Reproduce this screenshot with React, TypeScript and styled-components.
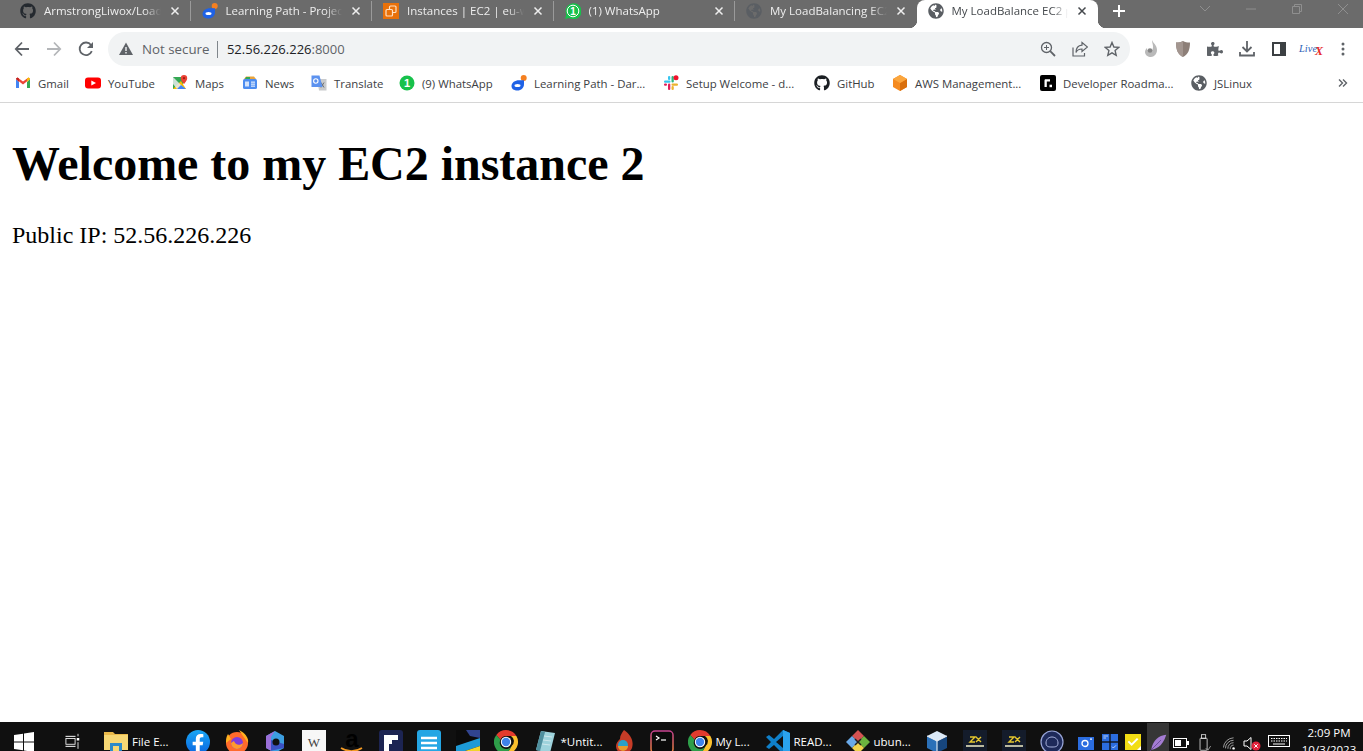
import React from "react";
import styled, { createGlobalStyle } from "styled-components";
import { FaGithub, FaGlobeAmericas, FaFacebookF, FaPuzzlePiece } from "react-icons/fa";

const GlobalStyle = createGlobalStyle`
  html, body { margin: 0; padding: 0; background: #fff; }
  body { font-family: "Open Sans", "Noto Sans", sans-serif; }
`;

const Screen = styled.div`
  width: 1363px;
  height: 751px;
  display: flex;
  flex-direction: column;
  overflow: hidden;
`;

/* tab strip */
const TabStrip = styled.div`
  height: 28px;
  flex: none;
  display: flex;
  background: #6b6b6b;
  padding-left: 9px;
`;

const Tab = styled.div<{ $active?: boolean }>`
  position: relative;
  width: 181.5px;
  height: 28px;
  box-sizing: border-box;
  padding: 0 9px 0 11px;
  display: flex;
  align-items: center;
  gap: 8px;
  color: ${(p) => (p.$active ? "#45494d" : "#eee")};
  background: ${(p) => (p.$active ? "#fff" : "transparent")};
  border-radius: ${(p) => (p.$active ? "8px 8px 0 0" : "0")};
  ${(p) =>
    p.$active
      ? `
    &::before, &::after {
      content: "";
      position: absolute;
      bottom: 0;
      width: 8px;
      height: 8px;
    }
    &::before { left: -8px; background: radial-gradient(circle at 0 0, transparent 8px, #fff 8.5px); }
    &::after { right: -8px; background: radial-gradient(circle at 100% 0, transparent 8px, #fff 8.5px); }
  `
      : ""}
`;

const TabDivider = styled.i<{ $hidden?: boolean }>`
  position: absolute;
  right: 0;
  top: 1px;
  height: 20px;
  width: 1px;
  background: ${(p) => (p.$hidden ? "transparent" : "#9a9a9a")};
`;

const TabTitle = styled.span`
  flex: 1;
  min-width: 0;
  font-size: 11.5px;
  white-space: nowrap;
  overflow: hidden;
  line-height: 22px;
  margin-top: -6px;
  -webkit-mask-image: linear-gradient(to right, #000 86%, transparent 100%);
  mask-image: linear-gradient(to right, #000 86%, transparent 100%);
`;

const Fav = styled.span<{ $inBar?: boolean }>`
  width: 16px;
  height: 16px;
  margin-top: ${(p) => (p.$inBar ? 0 : -6)}px;
  flex: none;
  display: flex;
  align-items: center;
  justify-content: center;
`;

const TabClose = styled.span<{ $dark?: boolean }>`
  width: 12px;
  height: 12px;
  margin-top: -6px;
  flex: none;
  margin-right: 1px;
  color: ${(p) => (p.$dark ? "#45494d" : "#eee")};
  display: flex;
`;

const NewTab = styled.span`
  width: 20px;
  height: 20px;
  margin: 1px 0 0 11px;
  color: #fff;
`;

const WindowControls = styled.div`
  margin-left: auto;
  margin-right: -3px;
  display: flex;
  color: #8f8f8f;
`;

const WinButton = styled.span`
  width: 46px;
  height: 17px;
  display: flex;
  align-items: center;
  justify-content: center;
`;

/* address bar */
const Toolbar = styled.div`
  height: 42px;
  flex: none;
  display: flex;
  align-items: center;
  padding: 0 4px 0 6px;
  background: #fff;
`;

const ToolButton = styled.span<{ $off?: boolean }>`
  width: 32px;
  height: 32px;
  flex: none;
  display: flex;
  align-items: center;
  justify-content: center;
  color: ${(p) => (p.$off ? "#b4b6b9" : "#5f6368")};
`;

const Omnibox = styled.div`
  flex: 1;
  height: 34px;
  margin: 0 5px 0 6px;
  padding: 0 2px 0 10px;
  border-radius: 17px;
  background: #f1f3f4;
  display: flex;
  align-items: center;
  font-size: 13px;
  white-space: nowrap;
`;

const NotSecure = styled.span`
  color: #5f6368;
  margin-left: 8px;
  font-size: 13.3px;
`;

const OmniDivider = styled.span`
  width: 1px;
  height: 17px;
  background: #80868b;
  margin: 0 9px 0 7.5px;
`;

const Host = styled.span`
  color: #202124;
`;

const Port = styled.span`
  color: #5f6368;
`;

const OmniRight = styled.div`
  margin-left: auto;
  display: flex;
`;

/* bookmarks */
const BookmarkBar = styled.div`
  height: 26px;
  flex: none;
  padding: 0 0 6px 15px;
  display: flex;
  align-items: center;
  background: #fff;
  border-bottom: 1px solid #d6d6d6;
`;

const Bookmark = styled.div`
  display: flex;
  align-items: center;
  gap: 7px;
  margin-right: 16.5px;
`;

const BookmarkLabel = styled.span<{ $w: number }>`
  width: ${(p) => p.$w}px;
  font-size: 11.4px;
  color: #3c4043;
  white-space: nowrap;
`;

const BookmarkMore = styled.span`
  margin-left: auto;
  width: 40px;
  display: flex;
  justify-content: center;
  color: #5f6368;
`;

/* page */
const Page = styled.main`
  flex: 1;
  min-height: 0;
  padding: 0 12px;
  background: #fff;
  color: #000;
  font-family: "Liberation Serif", "Times New Roman", serif;
`;

const Heading = styled.h1`
  margin: 33px 0 0;
  font-size: 48px;
  line-height: 55px;
  font-weight: 700;
  letter-spacing: -0.03px;
`;

const Paragraph = styled.p`
  margin: 30px 0 0;
  font-size: 24px;
  line-height: 28px;
`;

/* taskbar */
const Taskbar = styled.footer`
  height: 29px;
  flex: none;
  display: flex;
  background: #101010;
  color: #fff;
  overflow: hidden;
`;

const Slot = styled.div<{ $w: number; $lit?: boolean; $top?: number }>`
  width: ${(p) => p.$w}px;
  height: 40px;
  flex: none;
  padding-top: ${(p) => p.$top ?? 8}px;
  margin-top: ${(p) => (p.$lit ? 1 : 0)}px;
  box-sizing: border-box;
  display: flex;
  justify-content: center;
  background: ${(p) => (p.$lit ? "#363636" : "transparent")};
`;

const LabelSlot = styled.div<{ $w: number }>`
  width: ${(p) => p.$w}px;
  height: 40px;
  flex: none;
  padding: 8px 0 0 7px;
  box-sizing: border-box;
  display: flex;
  gap: 4px;
`;

const TaskLabel = styled.span`
  font-size: 11.5px;
  line-height: 16px;
  margin-top: 4px;
  color: #fff;
  white-space: nowrap;
`;

const FacebookBadge = styled.span`
  width: 24px;
  height: 24px;
  border-radius: 50%;
  background: linear-gradient(#19a7f5, #0a66e0);
  color: #fff;
  display: flex;
  align-items: flex-end;
  justify-content: center;
  overflow: hidden;
`;

const Clock = styled.div`
  width: 62px;
  margin-left: 5px;
  flex: none;
  text-align: center;
  font-size: 11.5px;
  line-height: 17px;
  padding-top: 2px;
`;

const T = ({ children, s = 24 }: { children: React.ReactNode; s?: number }) => (
  <svg width={s} height={s} viewBox="0 0 24 24" fill="none">
    {children}
  </svg>
);

const F = ({ children }: { children: React.ReactNode }) => (
  <svg width="16" height="16" viewBox="0 0 16 16" fill="none">
    {children}
  </svg>
);

const Close = () => (
  <svg width="12" height="12" viewBox="0 0 12 12">
    <path d="M2.5 2.5l7 7M9.5 2.5l-7 7" stroke="currentColor" strokeWidth="1.5" />
  </svg>
);

const LearnLogo = () => (
  <F>
    <circle cx="12.700" cy="3" r="3" fill="#f58020" />
    <path d="M0.500 11C0.500 7.500 4 5.200 8 5.200L13 5.200V9C13 13 10 15.500 6.500 15.500 3 15.500 0.500 14 0.500 11Z" fill="#1f62e6" />
    <ellipse cx="6.500" cy="10.500" rx="3" ry="1.500" fill="#fff" />
  </F>
);

const Gmail = () => (
  <F>
    <path d="M1 4v9h3V7z" fill="#4285f4" />
    <path d="M12 7v6h3V4z" fill="#34a853" />
    <path d="M1 4l7 5.500L15 4l-1.500-1.500L8 6.500 2.500 2.500z" fill="#ea4335" />
    <path d="M1 4V3.500L2.500 2.500 4 3.600V7z" fill="#c5221f" />
    <path d="M15 4v-.5l-1.500-1L12 3.600V7z" fill="#fbbc04" />
  </F>
);

const YouTube = () => (
  <F>
    <rect x="0" y="2.500" width="16" height="11" rx="3" fill="#f00" />
    <path d="M6.300 5.500L11 8l-4.700 2.500z" fill="#fff" />
  </F>
);

const Maps = () => (
  <F>
    <path d="M1 2h10v12H1z" fill="#34a853" />
    <path d="M1 14L9 6l5 8z" fill="#fbbc04" />
    <path d="M1 2l12 12H5L1 9z" fill="#e8eaed" opacity="0.85" />
    <path d="M5 14l4-4 5 4z" fill="#4285f4" />
    <path d="M12 0a3.200 3.200 0 0 0-3.200 3.200C8.800 5.500 12 9 12 9s3.200-3.500 3.200-5.800A3.200 3.200 0 0 0 12 0z" fill="#ea4335" />
    <circle cx="12" cy="3.200" r="1.100" fill="#a51c14" />
  </F>
);

const News = () => (
  <F>
    <path d="M2 4l2-2.500h8L14 4z" fill="#e8a33d" />
    <path d="M3 4l1-2h4v2z" fill="#34a853" />
    <rect x="1" y="4" width="14" height="10" rx="1.500" fill="#4d8df0" />
    <rect x="3" y="6.500" width="4" height="5" fill="#d4e3fb" />
    <rect x="9" y="6.500" width="4" height="1.300" fill="#d4e3fb" />
    <rect x="9" y="8.500" width="4" height="1.300" fill="#d4e3fb" />
    <rect x="9" y="10.500" width="4" height="1.300" fill="#d4e3fb" />
  </F>
);

const Translate = () => (
  <F>
    <path d="M6 4h9.500v11.500H8z" fill="#c8cacc" />
    <path d="M10 7.500l3 5M13 7.500l-3 5" stroke="#6b6f73" strokeWidth="1" />
    <path d="M0.500 0.500h8l3 11.500h-11z" fill="#5c92ef" />
    <circle cx="4.800" cy="6" r="2.200" stroke="#fff" strokeWidth="1.100" />
  </F>
);

const WaBadge = () => (
  <F>
    <circle cx="8" cy="8" r="7.500" fill="#17c14b" />
    <text x="8" y="12" textAnchor="middle" fontSize="11" fontWeight="700" fontFamily="Liberation Sans, sans-serif" fill="#fff">
      1
    </text>
  </F>
);

const WaTab = () => (
  <F>
    <path d="M0 16l1.300-4.500A8 8 0 1 1 4.300 15z" fill="#18c14b" />
    <circle cx="8" cy="8" r="5.800" fill="#18c14b" stroke="#fff" strokeWidth="1" />
    <text x="8" y="11.500" textAnchor="middle" fontSize="10" fontWeight="700" fontFamily="Liberation Sans, sans-serif" fill="#fff">
      1
    </text>
  </F>
);

const Slack = () => (
  <F>
    <rect x="1" y="5.500" width="6.500" height="2.300" rx="1.100" fill="#36c5f0" />
    <rect x="5" y="1" width="2.300" height="4" rx="1.100" fill="#36c5f0" />
    <rect x="8.500" y="1" width="2.300" height="6.500" rx="1.100" fill="#2eb67d" />
    <circle cx="13" cy="2.800" r="2.500" fill="#f0112b" />
    <rect x="8.500" y="8.500" width="6.500" height="2.300" rx="1.100" fill="#ecb22e" />
    <rect x="8.500" y="11" width="2.300" height="4" rx="1.100" fill="#ecb22e" />
    <rect x="5" y="8.500" width="2.300" height="6.500" rx="1.100" fill="#e01e5a" />
    <rect x="1" y="8.500" width="3" height="2.300" rx="1.100" fill="#e01e5a" />
  </F>
);

const Aws = () => (
  <F>
    <path d="M8 0l7 4v8l-7 4-7-4V4z" fill="#f58a1f" />
    <path d="M8 8l7-4v8l-7 4z" fill="#d96f0c" />
    <path d="M8 0l7 4-7 4-7-4z" fill="#fba63e" />
  </F>
);

const Roadmap = () => (
  <F>
    <rect width="16" height="16" rx="2" fill="#000" />
    <path d="M4.500 12V5.500C4.500 4.800 5 4.300 5.700 4.300H10v2.200H6.800V12z" fill="#fff" />
    <rect x="9.500" y="9.700" width="2.500" height="2.500" fill="#fff" />
  </F>
);

const Ec2Logo = () => (
  <F>
    <rect width="16" height="16" fill="#e8710a" />
    <rect x="6.500" y="3" width="6.500" height="6.500" rx="1" stroke="#ffe0c2" strokeWidth="1.200" />
    <rect x="3" y="6.500" width="6.500" height="6.500" rx="1" fill="#e8710a" stroke="#ffe0c2" strokeWidth="1.200" />
  </F>
);

const tabs = [
  { icon: <FaGithub size={16} color="#24292f" />, title: "ArmstrongLiwox/LoadBalancer" },
  { icon: <LearnLogo />, title: "Learning Path - Project" },
  { icon: <Ec2Logo />, title: "Instances | EC2 | eu-west-1" },
  { icon: <WaTab />, title: "(1) WhatsApp" },
  { icon: <FaGlobeAmericas size={16} color="#5a5e63" />, title: "My LoadBalancing EC2 page" },
];

const marks: { icon: React.ReactNode; label: string; w: number }[] = [
  { icon: <Gmail />, label: "Gmail", w: 30.5 },
  { icon: <YouTube />, label: "YouTube", w: 47.5 },
  { icon: <Maps />, label: "Maps", w: 30.5 },
  { icon: <News />, label: "News", w: 29.5 },
  { icon: <Translate />, label: "Translate", w: 48.5 },
  { icon: <WaBadge />, label: "(9) WhatsApp", w: 72.5 },
  { icon: <LearnLogo />, label: "Learning Path - Dar...", w: 112.5 },
  { icon: <Slack />, label: "Setup Welcome - d...", w: 111.5 },
  { icon: <FaGithub size={16} color="#1b1f23" />, label: "GitHub", w: 38.5 },
  { icon: <Aws />, label: "AWS Management...", w: 108.5 },
  { icon: <Roadmap />, label: "Developer Roadma...", w: 111.5 },
  { icon: <FaGlobeAmericas size={16} color="#5a5e63" />, label: "JSLinux", w: 40 },
];

const Chrome = () => (
  <T>
    <path d="M12 0a12 12 0 0 1 10.400 6H12a6 6 0 0 0-5.600 3.800L2.300 5A12 12 0 0 1 12 0z" fill="#e33b2e" />
    <path d="M22.400 6A12 12 0 0 1 13 24l5-8.500A6 6 0 0 0 17 6z" fill="#fbc02d" />
    <path d="M2.300 5A12 12 0 0 0 13 24l4.800-8.300a6 6 0 0 1-11.300-6z" fill="#2e9e49" />
    <circle cx="12" cy="12" r="5.200" fill="#fff" />
    <circle cx="12" cy="12" r="4.200" fill="#3f83ec" />
  </T>
);

const Exness = () => (
  <T>
    <rect width="24" height="24" fill="#141c2b" />
    <path d="M7 7h5l-5 5h5M13 7l5 5M18 7l-5 5" stroke="#e5c72e" strokeWidth="1.400" />
    <rect x="3" y="15" width="18" height="2" fill="#b9b9a0" />
  </T>
);

export default function App() {
  return (
    <Screen>
      <GlobalStyle />
      <TabStrip>
        {tabs.map((t, i) => (
          <Tab key={t.title}>
            <Fav>{t.icon}</Fav>
            <TabTitle>{t.title}</TabTitle>
            <TabClose>
              <Close />
            </TabClose>
            <TabDivider $hidden={i === 4} />
          </Tab>
        ))}
        <Tab $active>
          <Fav>
            <FaGlobeAmericas size={16} color="#5a5e63" />
          </Fav>
          <TabTitle>My LoadBalance EC2 page</TabTitle>
          <TabClose $dark>
            <Close />
          </TabClose>
        </Tab>
        <NewTab>
          <svg width="20" height="20" viewBox="0 0 20 20">
            <path d="M10 4v12M4 10h12" stroke="currentColor" strokeWidth="2" />
          </svg>
        </NewTab>
        <WindowControls>
          <WinButton>
            <svg width="12" height="7" viewBox="0 0 12 7" fill="none">
              <path d="M1 1l5 5 5-5" stroke="currentColor" />
            </svg>
          </WinButton>
          <WinButton>
            <svg width="12" height="2" viewBox="0 0 12 2">
              <path d="M1 1h10" stroke="currentColor" />
            </svg>
          </WinButton>
          <WinButton>
            <svg width="12" height="12" viewBox="0 0 12 12" fill="none">
              <path d="M1.500 3.500h7v7h-7zM3.500 3.500v-2h7v7h-2" stroke="currentColor" />
            </svg>
          </WinButton>
          <WinButton>
            <svg width="12" height="12" viewBox="0 0 12 12">
              <path d="M1 1l10 10M11 1L1 11" stroke="currentColor" />
            </svg>
          </WinButton>
        </WindowControls>
      </TabStrip>

      <Toolbar>
        <ToolButton>
          <svg width="16" height="16" viewBox="0 0 16 16" fill="none">
            <path d="M15 8H2M8 1.500L1.800 8 8 14.500" stroke="currentColor" strokeWidth="1.800" />
          </svg>
        </ToolButton>
        <ToolButton $off>
          <svg width="16" height="16" viewBox="0 0 16 16" fill="none">
            <path d="M1 8h13M8 1.500L14.200 8 8 14.500" stroke="currentColor" strokeWidth="1.800" />
          </svg>
        </ToolButton>
        <ToolButton>
          <svg width="16" height="16" viewBox="0 0 16 16" fill="none">
            <path d="M13.800 10.200A6.300 6.300 0 1 1 13 4" stroke="currentColor" strokeWidth="1.800" />
            <path d="M15 1v6H9z" fill="currentColor" />
          </svg>
        </ToolButton>
        <Omnibox>
          <svg width="16" height="16" viewBox="0 0 16 16">
            <path d="M8 1.500L15 14H1z" fill="#5f6368" />
            <path d="M8 6v4M8 11v1.500" stroke="#f1f3f4" strokeWidth="1.400" />
          </svg>
          <NotSecure>Not secure</NotSecure>
          <OmniDivider />
          <Host>52.56.226.226</Host>
          <Port>:8000</Port>
          <OmniRight>
            <ToolButton>
              <svg width="16" height="16" viewBox="0 0 16 16" fill="none">
                <circle cx="6.500" cy="6.500" r="5" stroke="currentColor" strokeWidth="1.300" />
                <path d="M10.200 10.200L15 15" stroke="currentColor" strokeWidth="1.800" />
                <path d="M4 6.500h5M6.500 4v5" stroke="currentColor" />
              </svg>
            </ToolButton>
            <ToolButton>
              <svg width="16" height="16" viewBox="0 0 16 16" fill="none">
                <path d="M1 6.500V15h11.500v-3" stroke="currentColor" strokeWidth="1.200" />
                <path d="M10 1.500L15.500 6 10 10.500V8C7 8 5 9 4 11.500 4 7 6.500 4.500 10 4.200z" stroke="currentColor" strokeWidth="1.200" />
              </svg>
            </ToolButton>
            <ToolButton>
              <svg width="16" height="16" viewBox="0 0 16 16" fill="none">
                <path d="M8 1.500l1.900 4.500 4.800.4-3.600 3.200 1.100 4.700L8 11.800l-4.200 2.500 1.100-4.700L1.300 6.400 6.100 6z" stroke="currentColor" strokeWidth="1.400" />
              </svg>
            </ToolButton>
          </OmniRight>
        </Omnibox>
        <ToolButton>
          <svg width="14" height="18" viewBox="0 0 14 18">
            <path d="M8 0c1 3 5 5 5 10 0 4-3 7-6 7-3 0-6-2-6-5 0-2 1-3 2-4 0 2 1 3 3 3 2 0 3-2 3-4 0-3-1-4-1-7z" fill="#b9b9b9" />
            <circle cx="6" cy="10.500" r="2.300" fill="#858585" />
          </svg>
        </ToolButton>
        <ToolButton>
          <svg width="14" height="16" viewBox="0 0 14 16">
            <path d="M7 0c2 1 4 1.500 7 1.500C14 9 12 13.500 7 16 2 13.500 0 9 0 1.500 3 1.500 5 1 7 0z" fill="#8d7f78" />
            <path d="M7 0v16C2 13.500 0 9 0 1.500 3 1.500 5 1 7 0z" fill="#a39690" />
          </svg>
        </ToolButton>
        <ToolButton>
          <FaPuzzlePiece size={16} />
        </ToolButton>
        <ToolButton>
          <svg width="16" height="16" viewBox="0 0 16 16" fill="none">
            <path d="M8 0v10M3.500 6L8 10.500 12.500 6" stroke="currentColor" strokeWidth="1.800" />
            <path d="M1 11v3.500h14V11" stroke="currentColor" strokeWidth="1.800" />
          </svg>
        </ToolButton>
        <ToolButton>
          <svg width="14" height="14" viewBox="0 0 14 14" fill="none">
            <rect x="1" y="1" width="12" height="12" stroke="#3c4043" strokeWidth="2" />
            <rect x="8" y="1" width="5" height="12" fill="#3c4043" />
          </svg>
        </ToolButton>
        <ToolButton>
          <svg width="26" height="16" viewBox="0 0 26 16">
            <text x="1" y="11" fontSize="10.500" fontStyle="italic" fontFamily="Liberation Serif, serif" fill="#2d5fb8">
              Live
            </text>
            <text x="17" y="14" fontSize="12" fontWeight="700" fontStyle="italic" fontFamily="Liberation Serif, serif" fill="#e62b2b">
              X
            </text>
          </svg>
        </ToolButton>
        <ToolButton>
          <svg width="4" height="14" viewBox="0 0 4 14">
            <circle cx="2" cy="2" r="1.500" fill="#5f6368" />
            <circle cx="2" cy="7" r="1.500" fill="#5f6368" />
            <circle cx="2" cy="12" r="1.500" fill="#5f6368" />
          </svg>
        </ToolButton>
      </Toolbar>

      <BookmarkBar>
        {marks.map((m) => (
          <Bookmark key={m.label}>
            <Fav $inBar>{m.icon}</Fav>
            <BookmarkLabel $w={m.w}>{m.label}</BookmarkLabel>
          </Bookmark>
        ))}
        <BookmarkMore>
          <svg width="10" height="10" viewBox="0 0 10 10" fill="none">
            <path d="M1 1.500L4.500 5 1 8.500M5 1.500L8.500 5 5 8.500" stroke="currentColor" strokeWidth="1.400" />
          </svg>
        </BookmarkMore>
      </BookmarkBar>

      <Page>
        <Heading>Welcome to my EC2 instance 2</Heading>
        <Paragraph>Public IP: 52.56.226.226</Paragraph>
      </Page>

      <Taskbar>
        <Slot $w={48} $top={10}>
          <svg width="20" height="20" viewBox="0 0 20 20">
            <path d="M0 3l9-1.300V9.500H0zM10 1.500L20 0v9.500H10zM0 10.500h9v7.800L0 17zM10 10.500h10V20l-10-1.500z" fill="#fff" />
          </svg>
        </Slot>
        <Slot $w={49} $top={11}>
          <T s={20}>
            <path d="M3 4h12M3 16h12" stroke="#fff" strokeWidth="1.200" />
            <rect x="3.500" y="6.500" width="11" height="7" stroke="#fff" />
            <rect x="16.500" y="6" width="3" height="3" fill="#fff" />
            <path d="M18 1v3M18 11v8" stroke="#fff" />
          </T>
        </Slot>
        <LabelSlot $w={82}>
          <T>
            <path d="M0 2h9l2 2h13v16H0z" fill="#eab94a" />
            <rect y="5" width="24" height="15" fill="#f7d774" />
            <rect x="6" y="13" width="12" height="11" fill="#2c8ac9" />
            <rect x="9" y="16" width="6" height="8" fill="#f7d774" />
          </T>
          <TaskLabel>File E...</TaskLabel>
        </LabelSlot>
        <Slot $w={38.5}>
          <FacebookBadge>
            <FaFacebookF size={20} />
          </FacebookBadge>
        </Slot>
        <Slot $w={38.5}>
          <T>
            <circle cx="12" cy="13" r="11" fill="#ff6a2b" />
            <path d="M14 0c6 3 10 8 9 13L18 6z" fill="#ffb11f" />
            <path d="M3 4c-2 3-2 6-2 9l5-4z" fill="#ffb11f" />
            <circle cx="12" cy="13" r="6" fill="#7d3cdc" />
            <path d="M6 13a6 6 0 0 0 12 0c-3 3-8 2-9-2z" fill="#ff9a2e" />
          </T>
        </Slot>
        <Slot $w={38.5}>
          <T>
            <path d="M12 1l9 5v12l-9 5-9-5V6z" fill="#3c9ee0" />
            <path d="M12 1L3 6v12l5 2.800V7z" fill="#9a6fd8" />
            <path d="M8 20.800L21 18v-4L8 10z" fill="#3b52c4" />
            <circle cx="13" cy="12" r="3.500" fill="#101010" />
          </T>
        </Slot>
        <Slot $w={38.5}>
          <svg width="24" height="24" viewBox="0 0 24 24">
            <rect width="24" height="24" fill="#f7f7f7" />
            <text x="12" y="17" textAnchor="middle" fontSize="13" fontFamily="Liberation Serif, serif" fill="#444">
              W
            </text>
          </svg>
        </Slot>
        <Slot $w={38.5}>
          <svg width="24" height="24" viewBox="0 0 24 24">
            <text x="12" y="17" textAnchor="middle" fontSize="24" fontWeight="700" fontFamily="Liberation Sans, sans-serif" fill="#000">
              a
            </text>
            <path d="M1 18c6 4 15 4 21 0" stroke="#f59a23" strokeWidth="1.600" fill="none" />
          </svg>
        </Slot>
        <Slot $w={38.5}>
          <T>
            <rect width="24" height="24" rx="3" fill="#1c2452" />
            <path d="M5 5h14v5h-6v4h-3v8H5z" fill="#fff" />
          </T>
        </Slot>
        <Slot $w={38.5}>
          <T>
            <rect width="24" height="24" rx="3" fill="#24a6e4" />
            <path d="M4 8h16M4 13h16M4 18h16" stroke="#fff" strokeWidth="2.500" />
          </T>
        </Slot>
        <Slot $w={38.5}>
          <T>
            <rect width="24" height="24" fill="#0b0b0b" />
            <path d="M0 16L24 8v8L0 24z" fill="#1d9ad6" />
            <path d="M0 24l24-8v8z" fill="#f1d52a" />
            <path d="M10 0h14v8l-10-2z" fill="#31448f" />
          </T>
        </Slot>
        <Slot $w={38.5}>
          <Chrome />
        </Slot>
        <LabelSlot $w={79}>
          <T>
            <path d="M8 1l14 2-5 20-14-3z" fill="#9ed3dc" />
            <path d="M3 20L8 1l4 1-5 19z" fill="#4e8f9e" />
            <path d="M11 6l8 1M10 10l8 1M9 14l8 1" stroke="#cfe8ec" />
          </T>
          <TaskLabel>*Untit...</TaskLabel>
        </LabelSlot>
        <Slot $w={38}>
          <T>
            <path d="M12 0c7 5 10 11 8 18-2 4-5 6-8 6-5 0-8-4-8-8 0-3 2-5 4-7 0-4 2-6 4-9z" fill="#c63c27" />
            <circle cx="11" cy="15" r="5" fill="#2ba0c7" />
            <path d="M6 16a5 5 0 0 0 10 0z" fill="#e89a2b" />
          </T>
        </Slot>
        <Slot $w={38}>
          <T>
            <defs>
              <linearGradient id="termEdge" x1="0" y1="0" x2="0" y2="1">
                <stop offset="0" stopColor="#c4418f" />
                <stop offset="1" stopColor="#f0883a" />
              </linearGradient>
            </defs>
            <rect x="1" y="1" width="22" height="22" rx="4" fill="#0a0a0a" stroke="url(#termEdge)" strokeWidth="1.500" />
            <path d="M6 6l3 2-3 2" stroke="#fff" strokeWidth="1.200" fill="none" />
            <path d="M11 10h5" stroke="#fff" strokeWidth="1.200" />
          </T>
        </Slot>
        <LabelSlot $w={78}>
          <Chrome />
          <TaskLabel>My L...</TaskLabel>
        </LabelSlot>
        <LabelSlot $w={80}>
          <T>
            <path d="M17 0l7 3v18l-7 3-9-9-5 4-3-2 5-5-5-5 3-2 5 4z" fill="#0f7fc9" />
            <path d="M17 6L10 12l7 6z" fill="#101010" />
            <path d="M17 0l7 3v18l-7 3z" fill="#2aa3ee" />
          </T>
          <TaskLabel>READ...</TaskLabel>
        </LabelSlot>
        <LabelSlot $w={79}>
          <T>
            <path d="M12 0l6 6-6 6-6-6z" fill="#d45252" />
            <path d="M18 6l6 6-6 6-6-6z" fill="#6cb33f" />
            <path d="M6 6l6 6-6 6-6-6z" fill="#6aa9e8" />
            <path d="M12 12l6 6-6 6-6-6z" fill="#f1d34e" />
            <path d="M9 9l6 6M15 9l-6 6" stroke="#222" strokeWidth="1.500" />
          </T>
          <TaskLabel>ubun...</TaskLabel>
        </LabelSlot>
        <Slot $w={38.5}>
          <T>
            <path d="M12 1l10 5-10 5L2 6z" fill="#dbe9f7" />
            <path d="M2 6l10 5v12L2 18z" fill="#2b70b8" />
            <path d="M22 6l-10 5v12l10-5z" fill="#17467d" />
            <path d="M2 6l10 5 10-5M12 11v12" stroke="#fff" strokeWidth="1" />
          </T>
        </Slot>
        <Slot $w={38.5}>
          <Exness />
        </Slot>
        <Slot $w={38.5}>
          <Exness />
        </Slot>
        <Slot $w={37}>
          <T>
            <circle cx="12" cy="12" r="11" fill="#1e2a5a" stroke="#97a4d6" strokeWidth="1.200" />
            <path d="M6 13c0-4 3-6 6-6s6 2 6 6-3 4-6 4-6 0-6-4z" stroke="#aab4df" fill="none" />
          </T>
        </Slot>
        <Slot $w={31} $top={15}>
          <svg width="16" height="13" viewBox="0 0 16 13">
            <rect width="16" height="13" fill="#2b6de0" />
            <circle cx="7" cy="6.500" r="3" fill="none" stroke="#fff" strokeWidth="1.300" />
            <rect x="12" y="1.500" width="2" height="1.200" fill="#fff" />
          </svg>
        </Slot>
        <Slot $w={17} $top={12}>
          <T s={16}>
            <rect x="0" y="0" width="11" height="11" fill="#2b6de0" />
            <rect x="13" y="0" width="11" height="11" fill="#2b6de0" />
            <rect x="0" y="13" width="11" height="11" fill="#2b6de0" />
            <rect x="13" y="13" width="11" height="11" fill="#2b6de0" />
            <path d="M2 3h7M2 6h4M15 19l2 2 4-4" stroke="#fff" />
          </T>
        </Slot>
        <Slot $w={29} $top={12}>
          <T s={16}>
            <rect width="24" height="24" fill="#f2dd14" />
            <path d="M5 11l5 5 9-9" stroke="#fff" strokeWidth="3" fill="none" />
            <path d="M24 18v6h-6z" fill="#fff" />
          </T>
        </Slot>
        <Slot $w={22} $lit $top={11}>
          <T s={18}>
            <path d="M23 1C13 2 5 8 3 21 8 20 18 18 23 1z" fill="#a47cd2" />
            <path d="M1 23L16 8" stroke="#5c3d88" />
          </T>
        </Slot>
        <Slot $w={24} $top={16}>
          <svg width="16" height="10" viewBox="0 0 16 10" fill="none">
            <rect x="0.500" y="0.500" width="13" height="9" stroke="#fff" />
            <rect x="2" y="2" width="6" height="6" fill="#fff" />
            <rect x="14" y="3" width="2" height="4" fill="#fff" />
          </svg>
        </Slot>
        <Slot $w={24} $top={12}>
          <svg width="14" height="17" viewBox="0 0 16 24" fill="none">
            <rect x="3" y="1" width="6" height="5" stroke="#fff" />
            <rect x="1" y="6" width="10" height="17" rx="1" stroke="#fff" />
            <path d="M9 20l3 3 4-6" stroke="#ccc" />
          </svg>
        </Slot>
        <Slot $w={24} $top={15}>
          <svg width="13" height="13" viewBox="0 0 16 16" fill="none">
            <path d="M0.500 13A13 13 0 0 1 13 1M3 14a10 10 0 0 1 10-10M6 14.500a7 7 0 0 1 7-7.500M9 15a4 4 0 0 1 4-5" stroke="#bbb" />
            <circle cx="13" cy="14" r="1.500" fill="#fff" />
          </svg>
        </Slot>
        <Slot $w={24} $top={15}>
          <svg width="20" height="14" viewBox="0 0 20 14" fill="none">
            <path d="M1 4h3l4-3.500v12L4 9H1z" stroke="#fff" />
            <circle cx="13" cy="9" r="4.500" fill="#e0213a" />
            <path d="M11.300 7.300l3.400 3.400M14.700 7.300l-3.400 3.400" stroke="#fff" />
          </svg>
        </Slot>
        <Slot $w={28} $top={13}>
          <svg width="22" height="12" viewBox="0 0 22 12" fill="none">
            <rect x="0.500" y="0.500" width="21" height="11" stroke="#fff" />
            <path d="M3 3.500h16M3 6h16" stroke="#fff" strokeDasharray="1.500 1" />
            <path d="M5 9h12" stroke="#fff" />
          </svg>
        </Slot>
        <Clock>
          2:09 PM
          <br />
          10/3/2023
        </Clock>
      </Taskbar>
    </Screen>
  );
}
